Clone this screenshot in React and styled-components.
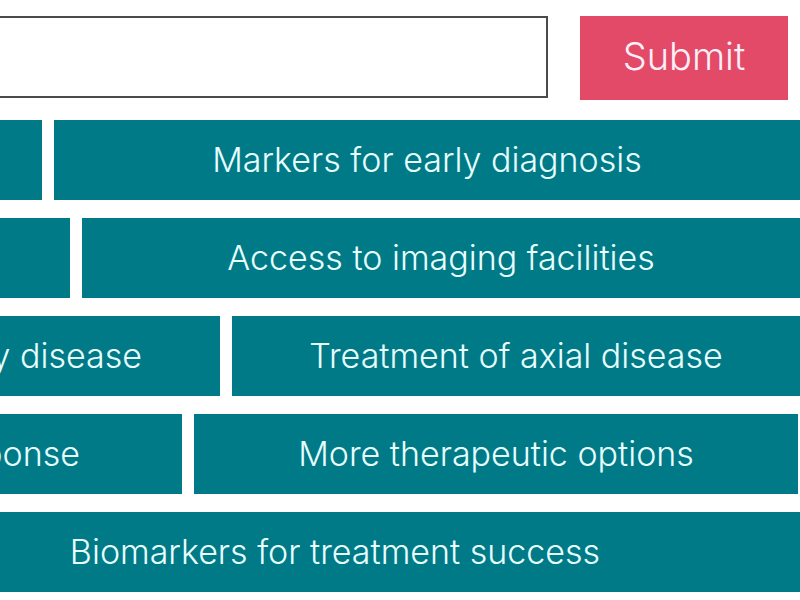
import React from "react";
import styled, { createGlobalStyle } from "styled-components";

const GlobalStyle = createGlobalStyle`
  *, *::before, *::after { box-sizing: border-box; }
  body {
    margin: 0;
    background: #fff;
    overflow-x: hidden;
    font-family: "Inter", "Liberation Sans", sans-serif;
    font-weight: 300;
  }
`;

const Page = styled.main`
  overflow: hidden;
  padding: 16px 0 8px;
`;

const Form = styled.form`
  display: flex;
  align-items: flex-start;
  gap: 32px;
  padding-right: 12px;
  margin-bottom: 20px;
`;

const Field = styled.input`
  flex: 1;
  min-width: 0;
  height: 82px;
  padding: 0 24px;
  border: 2px solid #4b4b4d;
  border-left: 0;
  border-radius: 0;
  background: #fff;
  color: #4b4b4d;
  font: inherit;
  font-size: 34px;
`;

const Submit = styled.button`
  width: 208px;
  height: 84px;
  padding: 0 0 4px;
  border: 0;
  background: #e24a68;
  color: #fff0f8;
  font: inherit;
  font-size: 38px;
  cursor: pointer;
`;

const Topics = styled.section`
  display: flex;
  flex-direction: column;
  gap: 18px;
`;

const Row = styled.div`
  display: flex;
  gap: 12px;
  padding-right: ${(p) => p.$end || 0}px;
`;

const Topic = styled.button`
  flex: ${(p) => (p.$width ? `0 0 ${p.$width}px` : "1 1 0")};
  display: flex;
  justify-content: ${(p) => (p.$width ? "flex-end" : "center")};
  align-items: center;
  min-width: 0;
  height: 80px;
  margin-left: ${(p) => (p.$bleed ? -p.$bleed : 0)}px;
  padding: 0 ${(p) => p.$pad || 0}px 2px 0;
  border: 0;
  overflow: hidden;
  background: #007a87;
  color: #e8ffff;
  font: inherit;
  font-size: 34px;
  white-space: nowrap;
  cursor: pointer;
`;

const rows = [
  { items: [{ width: 42 }, { label: "Markers for early diagnosis" }] },
  { items: [{ width: 70 }, { label: "Access to imaging facilities" }] },
  { items: [{ width: 220, pad: 78, label: "y disease" }, { label: "Treatment of axial disease" }] },
  { end: 2, items: [{ width: 182, pad: 102, label: "ponse" }, { label: "More therapeutic options" }] },
  { items: [{ bleed: 130, label: "Biomarkers for treatment success" }] },
];

export default function App() {
  return (
    <>
      <GlobalStyle />
      <Page>
        <Form onSubmit={(e) => e.preventDefault()}>
          <Field type="text" aria-label="Your answer" />
          <Submit type="submit">Submit</Submit>
        </Form>
        <Topics aria-label="Topics">
          {rows.map((row, i) => (
            <Row key={i} $end={row.end}>
              {row.items.map((t, j) => (
                <Topic
                  key={j}
                  type="button"
                  $width={t.width}
                  $pad={t.pad}
                  $bleed={t.bleed}
                  aria-label={t.label ? undefined : "Topic"}
                >
                  {t.label}
                </Topic>
              ))}
            </Row>
          ))}
        </Topics>
      </Page>
    </>
  );
}
